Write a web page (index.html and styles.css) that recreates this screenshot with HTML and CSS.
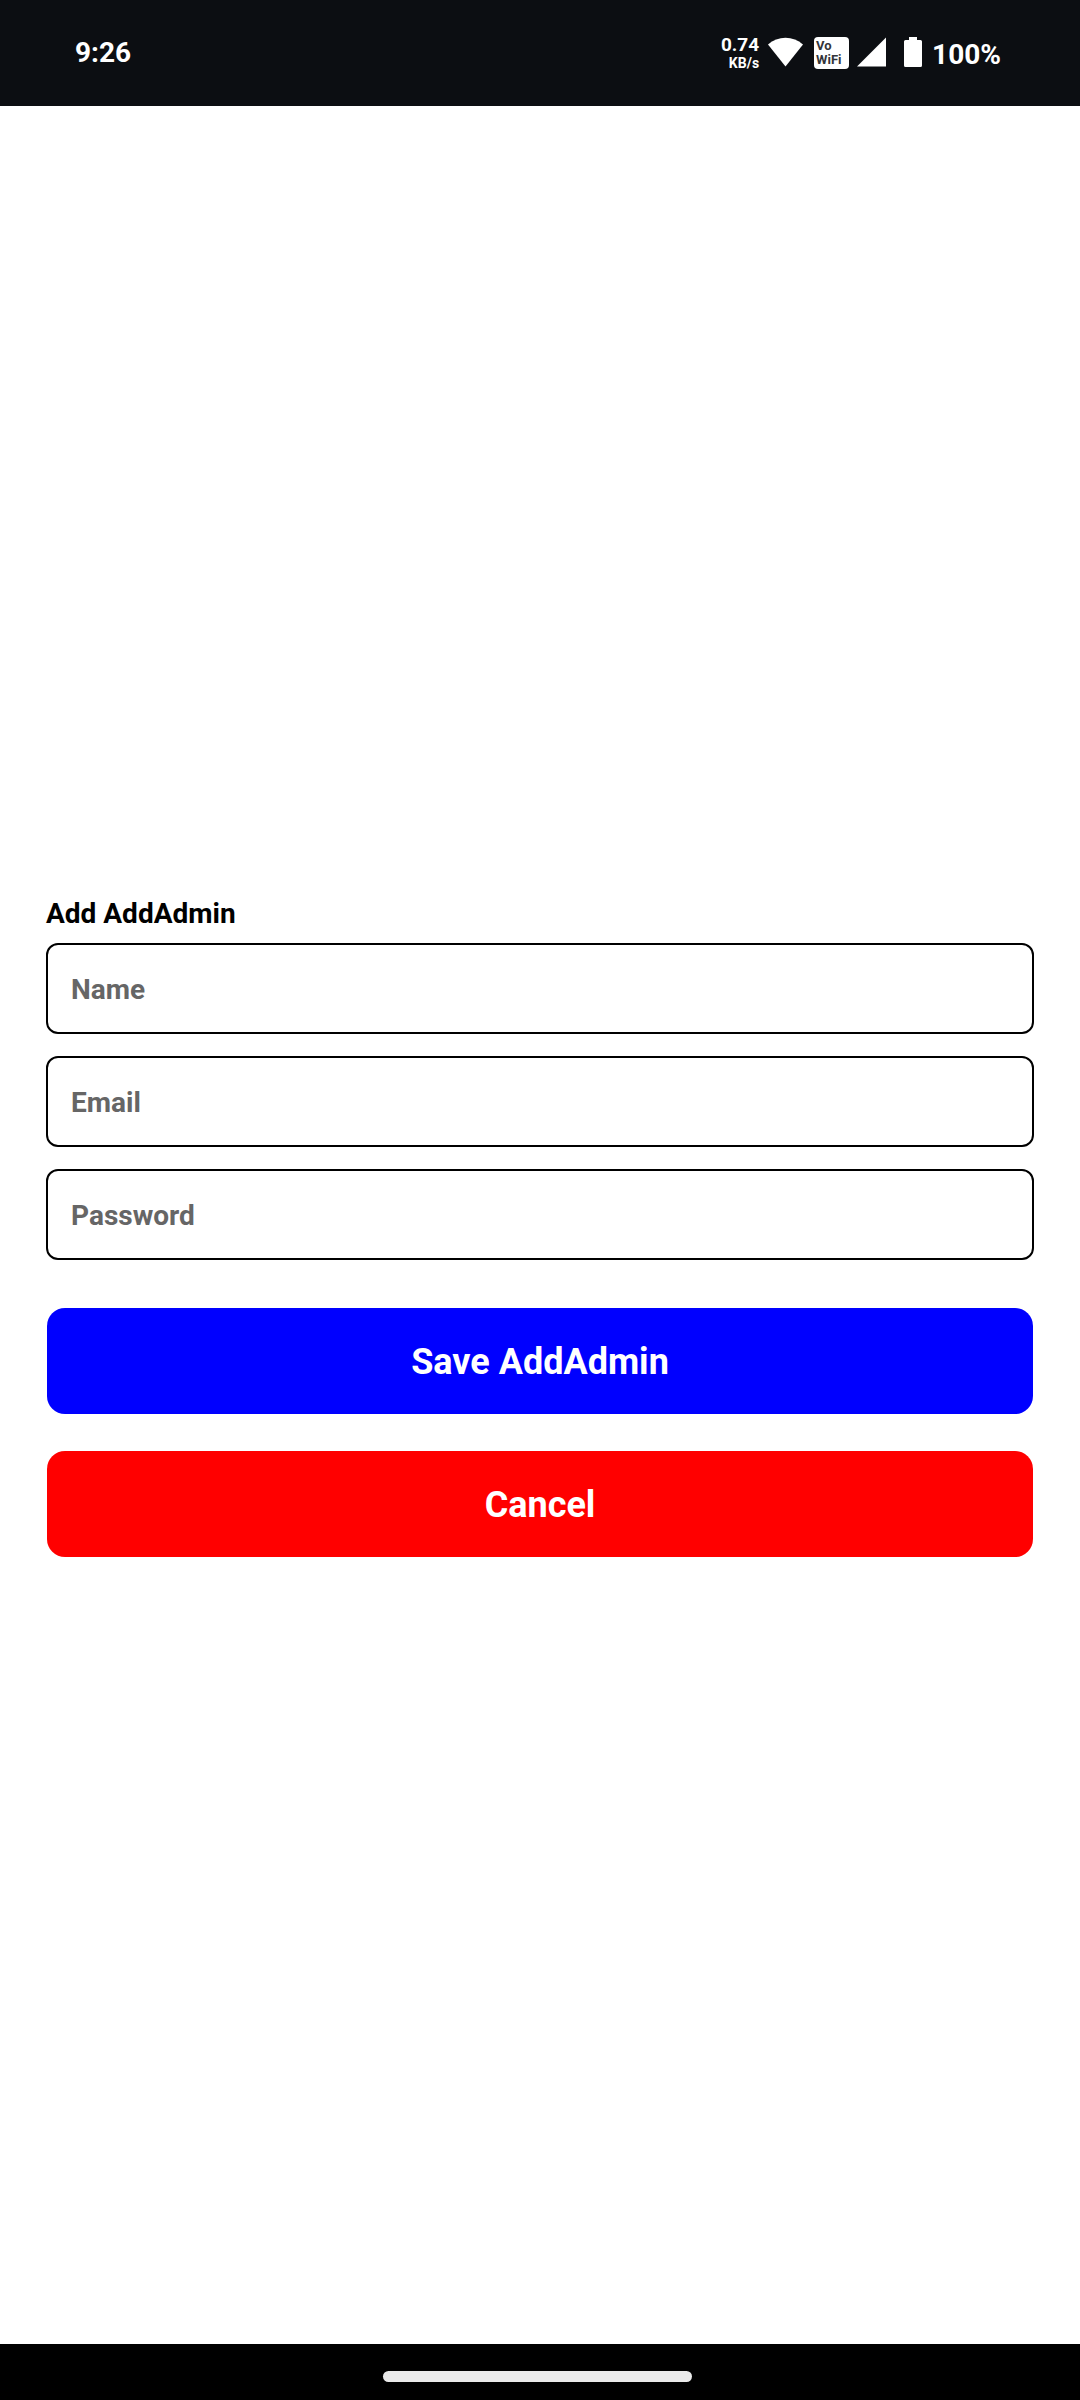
FILE: index.html
```html
<!DOCTYPE html>
<html lang="en">
<head>
<meta charset="utf-8">
<meta name="viewport" content="width=device-width, initial-scale=1">
<title>Add AddAdmin</title>
<link rel="stylesheet" href="styles.css">
</head>
<body>
<div class="screen">
  <header class="status-bar">
    <time class="clock">9:26</time>
    <div class="indicators">
      <div class="speed"><span class="speed-value">0.74</span><span class="speed-unit">KB/s</span></div>
      <svg class="wifi" width="36" height="30" viewBox="0 0 36 30" aria-hidden="true"><path d="M0 7.5C5 3 11 .8 17.500 .8S30 3 35 7.500L17.500 29.500Z" fill="#fff"/></svg>
      <div class="vowifi"><span>Vo</span><span>WiFi</span></div>
      <svg class="signal" width="30" height="30" viewBox="0 0 30 30" aria-hidden="true"><path d="M29 .5V29.500H0Z" fill="#fff"/></svg>
      <svg class="battery" width="18" height="30" viewBox="0 0 18 30" aria-hidden="true"><path d="M5 0H13V3H16.500Q18 3 18 4.500V28.500Q18 30 16.500 30H1.500Q0 30 0 28.500V4.500Q0 3 1.500 3H5Z" fill="#fff"/></svg>
      <span class="percent">100%</span>
    </div>
  </header>
  <main class="content">
    <form class="form">
      <h1 class="title">Add AddAdmin</h1>
      <div class="fields">
        <input class="field" type="text" placeholder="Name" aria-label="Name">
        <input class="field" type="email" placeholder="Email" aria-label="Email">
        <input class="field" type="password" placeholder="Password" aria-label="Password">
      </div>
      <div class="actions">
        <button class="button save" type="submit">Save AddAdmin</button>
        <button class="button cancel" type="button">Cancel</button>
      </div>
    </form>
  </main>
  <footer class="nav-bar"><div class="handle"></div></footer>
</div>
</body>
</html>
```
FILE: styles.css
```css
* {
  box-sizing: border-box;
}

body {
  margin: 0;
  background: #fff;
  color: #000;
  font-family: Roboto, "Liberation Sans", sans-serif;
  font-size: 28px;
  font-weight: 700;
}

.screen {
  display: flex;
  flex-direction: column;
  min-height: 100vh;
}

.status-bar {
  display: flex;
  justify-content: space-between;
  align-items: flex-start;
  padding: 36px 79px 36px 75px;
  background: #0c0e12;
  color: #fff;
}

.clock {
  line-height: 34px;
}

.indicators {
  display: flex;
  align-items: flex-start;
  height: 34px;
}

.speed {
  display: flex;
  flex-direction: column;
  align-items: flex-end;
  margin-right: 9px;
}

.speed-value {
  font-size: 19px;
  line-height: 18px;
}

.speed-unit {
  font-size: 14px;
  line-height: 18px;
}

.wifi,
.signal,
.battery {
  display: block;
  flex: none;
  margin-top: 1px;
}

.vowifi {
  display: flex;
  flex-direction: column;
  width: 35px;
  margin: 1px 8px 0 10px;
  padding: 2px;
  border-radius: 4px;
  background: #fff;
  color: #33353a;
  font-size: 13px;
  line-height: 14px;
}

.signal {
  margin-right: 17px;
}

.percent {
  margin-left: 10px;
  line-height: 38px;
}

.content {
  display: flex;
  flex: 1;
  flex-direction: column;
  justify-content: center;
  padding: 0 46px;
}

.title {
  margin: 0 0 10px;
  font-size: 28px;
  line-height: 39px;
}

.fields {
  display: flex;
  flex-direction: column;
  gap: 22px;
}

.field {
  width: 100%;
  height: 91px;
  padding: 2px 23px 0;
  border: 2px solid #000;
  border-radius: 12px;
  background: #fff;
  color: #000;
  font: inherit;
}

.field::placeholder {
  color: #666;
  opacity: 1;
}

.actions {
  display: flex;
  flex-direction: column;
  gap: 37px;
  margin: 48px 1px 0;
}

.button {
  height: 106px;
  padding: 3px 0 0;
  border: 0;
  border-radius: 18px;
  color: #fff;
  font: inherit;
  font-size: 36px;
}

.save {
  background: #00f;
}

.cancel {
  background: #f00;
}

.nav-bar {
  display: flex;
  justify-content: center;
  padding: 27px 5px 18px 0;
  background: #000;
}

.handle {
  width: 309px;
  height: 11px;
  border-radius: 6px;
  background: #eaeaea;
}
```
